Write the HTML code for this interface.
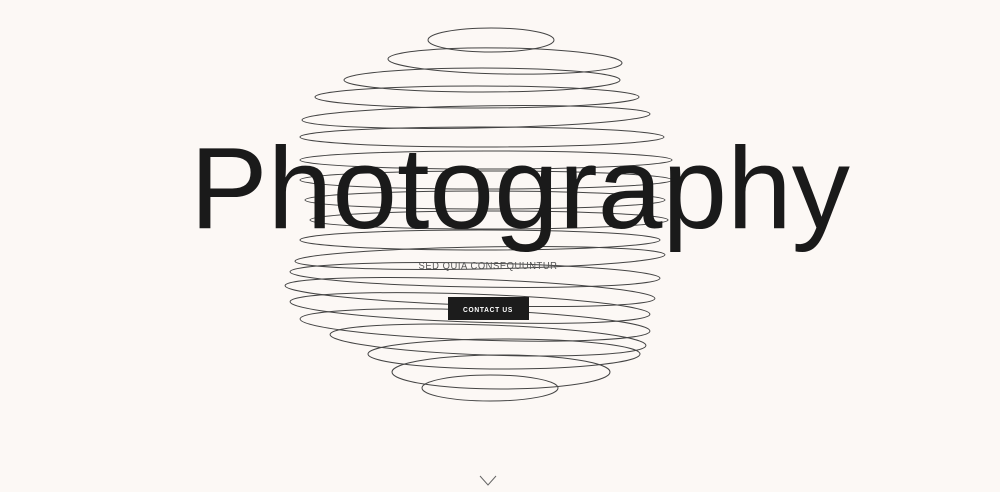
<!DOCTYPE html>
<html><head><meta charset="utf-8"><style>
html,body{margin:0;padding:0;width:1000px;height:492px;overflow:hidden;background:#fcf8f5;font-family:"Liberation Sans",sans-serif;}
</style></head><body>
<svg width="1000" height="492" viewBox="0 0 1000 492" xmlns="http://www.w3.org/2000/svg" style="position:absolute;left:0;top:0">
<g fill="none" stroke="#444" stroke-width="1">
<ellipse cx="491" cy="40" rx="63" ry="12"/>
<ellipse cx="505" cy="61" rx="117" ry="13" transform="rotate(1 505 61)"/>
<ellipse cx="482" cy="80" rx="138" ry="12"/>
<ellipse cx="477" cy="97" rx="162" ry="11"/>
<ellipse cx="476" cy="117" rx="174" ry="11" transform="rotate(-1 476 117)"/>
<ellipse cx="482" cy="137" rx="182" ry="10"/>
<ellipse cx="486" cy="160" rx="186" ry="9"/>
<ellipse cx="486" cy="180" rx="186" ry="9"/>
<ellipse cx="485" cy="200" rx="180" ry="9"/>
<ellipse cx="489" cy="220" rx="179" ry="9"/>
<ellipse cx="480" cy="240" rx="180" ry="10"/>
<ellipse cx="480" cy="258" rx="185" ry="11" transform="rotate(-1 480 258)"/>
<ellipse cx="475" cy="275" rx="185" ry="12" transform="rotate(1 475 275)"/>
<ellipse cx="470" cy="292" rx="185" ry="13" transform="rotate(2 470 292)"/>
<ellipse cx="470" cy="308" rx="180" ry="14" transform="rotate(2 470 308)"/>
<ellipse cx="475" cy="325" rx="175" ry="15" transform="rotate(2 475 325)"/>
<ellipse cx="488" cy="340" rx="158" ry="15" transform="rotate(2 488 340)"/>
<ellipse cx="504" cy="354" rx="136" ry="15"/>
<ellipse cx="501" cy="372" rx="109" ry="17"/>
<ellipse cx="490" cy="388" rx="68" ry="13"/>
</g>
<text x="190" y="228" font-family="Liberation Sans, sans-serif" font-size="116" fill="#1a1a1a" textLength="660" lengthAdjust="spacingAndGlyphs">Photography</text>
<text x="488" y="269" text-anchor="middle" font-size="10" letter-spacing="0.6" fill="#555" textLength="139" lengthAdjust="spacingAndGlyphs">SED QUIA CONSEQUUNTUR</text>
<rect x="448" y="297" width="81" height="23" fill="#1c1c1c"/>
<text x="488" y="312" text-anchor="middle" font-size="7.5" font-weight="bold" letter-spacing="0.8" fill="#fff" textLength="50" lengthAdjust="spacingAndGlyphs">CONTACT US</text>
<path d="M480 476 L488 485 L496 476" fill="none" stroke="#666" stroke-width="1"/>
</svg>
</body></html>
